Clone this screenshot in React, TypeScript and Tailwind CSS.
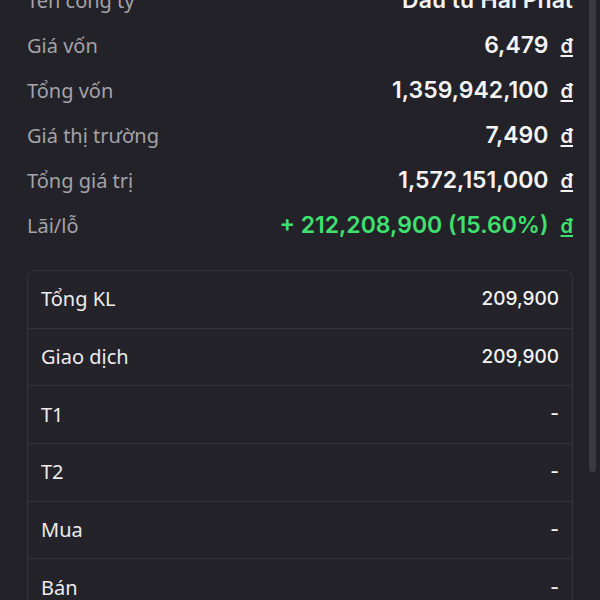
import React from 'react';

interface InfoRow {
  label: string;
  value: string;
  currency?: boolean;
  green?: boolean;
}

const infoRows: InfoRow[] = [
  { label: 'Tên công ty', value: 'Đầu tư Hải Phát' },
  { label: 'Giá vốn', value: '6,479', currency: true },
  { label: 'Tổng vốn', value: '1,359,942,100', currency: true },
  { label: 'Giá thị trường', value: '7,490', currency: true },
  { label: 'Tổng giá trị', value: '1,572,151,000', currency: true },
  { label: 'Lãi/lỗ', value: '+ 212,208,900 (15.60%)', currency: true, green: true },
];

const volumeRows = [
  { label: 'Tổng KL', value: '209,900' },
  { label: 'Giao dịch', value: '209,900' },
  { label: 'T1', value: '-' },
  { label: 'T2', value: '-' },
  { label: 'Mua', value: '-' },
  { label: 'Bán', value: '-' },
];

const App: React.FC = () => {
  return (
    <div
      className="relative h-[600px] w-[600px] overflow-hidden bg-[#232228]"
      style={{ fontFamily: '"Noto Sans", sans-serif' }}
    >
      <div className="-mt-[22px] px-[27px]">
        {infoRows.map((row) => (
          <div key={row.label} className="flex h-[45px] items-center justify-between">
            <span className="text-[20px] text-[#a3a3a9]">{row.label}</span>
            <div
              className={`flex items-center gap-[12px] text-[23px] font-semibold ${
                row.green ? 'text-[#3fe06f]' : 'text-[#f4f4f6]'
              }`}
              style={{ fontFamily: 'Inter, sans-serif' }}
            >
              <span>{row.value}</span>
              {row.currency && <span className="text-[20px] underline underline-offset-2">đ</span>}
            </div>
          </div>
        ))}

        <div className="mt-[22px] rounded-lg border border-[#34333a] bg-[#242329]">
          {volumeRows.map((row) => (
            <div
              key={row.label}
              className="flex h-[57.7px] items-center justify-between border-b border-[#34333a] px-[13px]"
            >
              <span className="text-[20px] text-[#ececef]">{row.label}</span>
              <span className="text-[19px] font-medium text-[#f4f4f6]" style={{ fontFamily: 'Inter, sans-serif' }}>
                {row.value}
              </span>
            </div>
          ))}
        </div>
      </div>

      {/* scrollbar */}
      <div className="absolute right-[4px] top-0 h-[472px] w-[7px] rounded-b bg-[#3b3a40]" />
    </div>
  );
};

export default App;
